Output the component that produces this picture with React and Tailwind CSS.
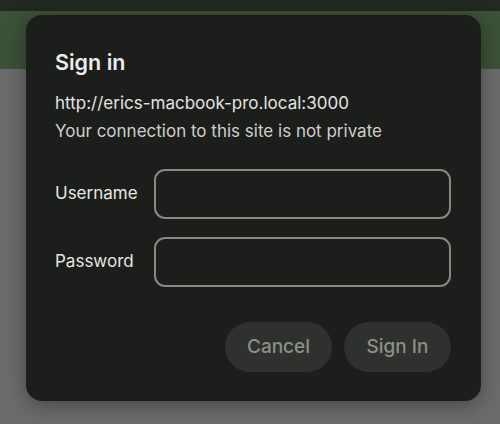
export default function App() {
  return (
    <div className="relative h-[424px] w-[500px] overflow-hidden bg-[#6b6b6b] font-['Inter',sans-serif]">
      {/* page behind the sheet */}
      <div className="h-[11px] bg-[#212a21]" />
      <div className="h-[58px] bg-[#3c5138]" />

      {/* sign in sheet */}
      <div className="absolute left-[26px] top-[15px] w-[455px] rounded-[16px] bg-[#1c1e1b] pb-[29px] pl-[29px] pr-[30px] pt-[32px] shadow-[0_4px_20px_rgba(0,0,0,0.35)]">
        <h1 className="text-[21.5px] font-semibold leading-[30px] text-[#ececea]">Sign in</h1>
        <div className="mt-[12px] text-[17px] leading-[28px]">
          <p className="text-[#e4e4e1]">http://erics-macbook-pro.local:3000</p>
          <p className="text-[#cfcfcc]">Your connection to this site is not private</p>
        </div>

        <div className="mt-[24px] flex flex-col gap-[18px]">
          <div className="flex items-center">
            <label className="w-[99px] text-[17px] text-[#e6e6e3]">Username</label>
            <input className="h-[50px] flex-1 rounded-[11px] border-2 border-[#878884] bg-transparent px-3 text-[16px] text-white outline-none" />
          </div>
          <div className="flex items-center">
            <label className="w-[99px] text-[17px] text-[#e6e6e3]">Password</label>
            <input type="password" className="h-[50px] flex-1 rounded-[11px] border-2 border-[#878884] bg-transparent px-3 text-[16px] text-white outline-none" />
          </div>
        </div>

        <div className="mt-[35px] flex justify-end gap-[12px]">
          <button className="h-[50px] w-[107px] rounded-full bg-[#2e312d] text-[19px] font-medium text-[#8c8f8a]">Cancel</button>
          <button className="h-[50px] w-[107px] rounded-full bg-[#2e312d] text-[19px] font-medium text-[#8c8f8a]">Sign In</button>
        </div>
      </div>
    </div>
  );
}
